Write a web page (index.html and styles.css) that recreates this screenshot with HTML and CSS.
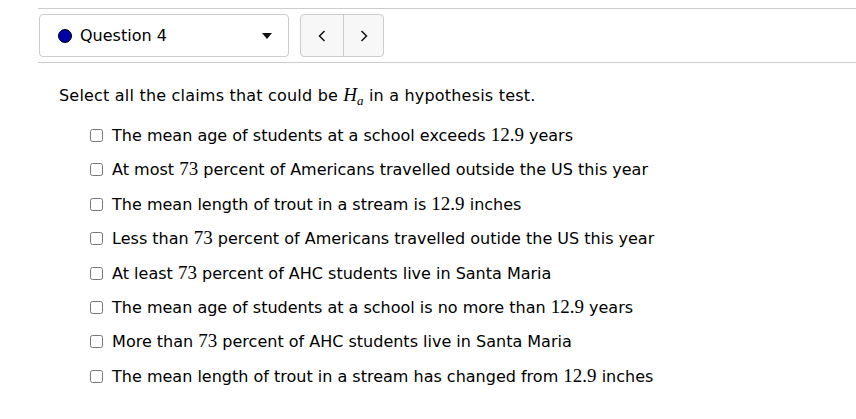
FILE: index.html
```html
<!DOCTYPE html>
<html lang="en">
<head>
  <meta charset="UTF-8">
  <title>Question 4</title>
  <link rel="stylesheet" href="styles.css">
</head>
<body>
  <div class="toolbar">
    <div class="qselect">
      <span class="dot"></span>
      <span class="qname">Question 4</span>
      <svg class="caret" width="10" height="6" viewBox="0 0 10 6"><path d="M0 0h10L5 6z" fill="#111"/></svg>
    </div>
    <div class="nav">
      <button class="navbtn"><svg width="8" height="12" viewBox="0 0 8 12"><path d="M6.5 1L1.5 6l5 5" fill="none" stroke="#111" stroke-width="1.5"/></svg></button>
      <button class="navbtn"><svg width="8" height="12" viewBox="0 0 8 12"><path d="M1.5 1l5 5-5 5" fill="none" stroke="#111" stroke-width="1.5"/></svg></button>
    </div>
  </div>

  <main class="question">
    <p class="prompt">Select all the claims that could be <span class="math"><i>H</i><sub><i>a</i></sub></span> in a hypothesis test.</p>
    <ul class="choices">
      <li><label><input type="checkbox"> The mean age of students at a school exceeds <span class="math">12.9</span> years</label></li>
      <li><label><input type="checkbox"> At most <span class="math">73</span> percent of Americans travelled outside the US this year</label></li>
      <li><label><input type="checkbox"> The mean length of trout in a stream is <span class="math">12.9</span> inches</label></li>
      <li><label><input type="checkbox"> Less than <span class="math">73</span> percent of Americans travelled outide the US this year</label></li>
      <li><label><input type="checkbox"> At least <span class="math">73</span> percent of AHC students live in Santa Maria</label></li>
      <li><label><input type="checkbox"> The mean age of students at a school is no more than <span class="math">12.9</span> years</label></li>
      <li><label><input type="checkbox"> More than <span class="math">73</span> percent of AHC students live in Santa Maria</label></li>
      <li><label><input type="checkbox"> The mean length of trout in a stream has changed from <span class="math">12.9</span> inches</label></li>
    </ul>
  </main>
</body>
</html>
```

FILE: styles.css
```css
body {
  margin: 0;
  font-family: 'DejaVu Sans', sans-serif;
  font-size: 16px;
  color: #000;
  background: #fff;
}
.toolbar {
  display: flex;
  align-items: center;
  gap: 11px;
  margin: 8px 0 0 38px;
  padding: 5px 0 5px 1px;
  border-top: 1px solid #ccc;
  border-bottom: 1px solid #ccc;
  height: 43px;
}
.qselect {
  display: flex;
  align-items: center;
  box-sizing: border-box;
  width: 250px;
  height: 43px;
  padding: 0 16px 0 18px;
  border: 1px solid #ccc;
  border-radius: 4px;
}
.dot {
  width: 12px;
  height: 12px;
  border: 1px solid #000;
  border-radius: 50%;
  background: #0000aa;
  margin-right: 8px;
}
.qname {
  flex: 1;
}
.nav {
  display: flex;
  height: 43px;
  border: 1px solid #ccc;
  border-radius: 4px;
  background: #f7f7f7;
  box-sizing: border-box;
}
.navbtn {
  width: 42px;
  border: 0;
  background: none;
  padding: 0;
  display: flex;
  align-items: center;
  justify-content: center;
}
.navbtn + .navbtn {
  width: 40px;
  border-left: 1px solid #ccc;
}
.question {
  padding: 0 0 0 59px;
}
.prompt {
  margin: 21px 0 15px;
  letter-spacing: 0.2px;
}
.math {
  font-family: 'Liberation Serif', serif;
  font-size: 19px;
  letter-spacing: 0;
}
.math sub {
  font-size: 13px;
  vertical-align: -4px;
}
.choices {
  list-style: none;
  margin: 0;
  padding: 0 0 0 30px;
}
.choices li {
  height: 34.4px;
}
.choices input {
  margin: 0 4px 0 1px;
  width: 13px;
  height: 13px;
  vertical-align: -1px;
}
```
